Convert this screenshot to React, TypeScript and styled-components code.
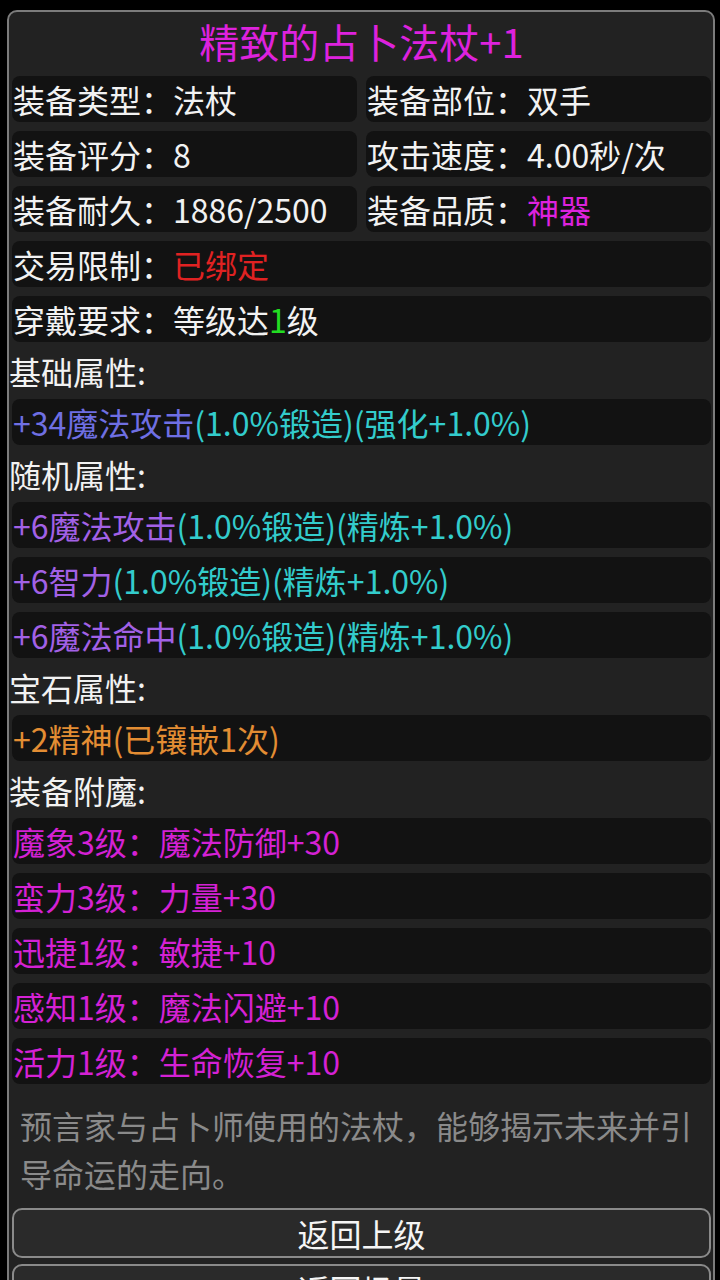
import React from "react";
import styled, { createGlobalStyle } from "styled-components";

const GlobalStyle = createGlobalStyle`
  html, body {
    margin: 0;
    padding: 0;
    background: #000;
  }
  body {
    font-family: "Noto Sans CJK SC", "Noto Sans", sans-serif;
    color: #f2f2f2;
  }
  * { box-sizing: border-box; }
`;

const Page = styled.div`
  padding: 10px 0 0 7px;
  width: 715px;
  height: 1280px;
  overflow: hidden;
`;

const Panel = styled.div`
  border: 2px solid #7c7c7c;
  border-radius: 10px;
  background: #222222;
  padding: 0 2px 20px 3px;
`;

const Title = styled.div`
  text-align: center;
  font-size: 40px;
  line-height: 52px;
  padding-top: 3px;
  margin-bottom: 9px;
  color: #dd22dd;
  white-space: nowrap;
`;

const Stack = styled.div`
  display: flex;
  flex-direction: column;
  gap: 9px;
`;

const Grid = styled.div`
  display: grid;
  grid-template-columns: 1fr 1fr;
  gap: 9px;
`;

const Box = styled.div`
  background: #121212;
  border-radius: 8px;
  height: 46px;
  line-height: 46px;
  padding-left: 1px;
  font-size: 32px;
  color: #f2f2f2;
  white-space: nowrap;
  overflow: hidden;
`;

const Header = styled.div`
  height: 39px;
  line-height: 40px;
  margin-left: -3px;
  font-size: 32px;
  color: #f2f2f2;
  white-space: nowrap;
`;

const Tint = styled.span<{ $c: string }>`
  color: ${(p) => p.$c};
`;

const Desc = styled.div`
  color: #8a8a8a;
  font-size: 32px;
  line-height: 48px;
  padding: 8px 10px 2px 8px;
`;

const Buttons = styled.div`
  display: flex;
  flex-direction: column;
  gap: 6px;
`;

const Button = styled.button`
  width: 100%;
  height: 50px;
  border: 2px solid #8a8a8a;
  border-radius: 10px;
  background: #2a2a2a;
  color: #f5f5f5;
  font-family: inherit;
  font-size: 32px;
  line-height: 46px;
  padding: 0;
  text-align: center;
`;

const WHITE = "#f2f2f2";
const MAGENTA = "#dd22dd";
const BLUE = "#6f6fe3";
const PURPLE = "#a261e6";
const CYAN = "#33cccc";
const ORANGE = "#e38d33";
const RED = "#e02222";
const GREEN = "#22dd22";
const ENCH = "#d421d4";

type Part = [string, string];

const basic: Part[][] = [
  [["+34魔法攻击", BLUE], ["(1.0%锻造)(强化+1.0%)", CYAN]],
];

const random: Part[][] = [
  [["+6魔法攻击", PURPLE], ["(1.0%锻造)(精炼+1.0%)", CYAN]],
  [["+6智力", PURPLE], ["(1.0%锻造)(精炼+1.0%)", CYAN]],
  [["+6魔法命中", PURPLE], ["(1.0%锻造)(精炼+1.0%)", CYAN]],
];

const gems: Part[][] = [[["+2精神(已镶嵌1次)", ORANGE]]];

const enchants: Part[][] = [
  [["魔象3级：魔法防御+30", ENCH]],
  [["蛮力3级：力量+30", ENCH]],
  [["迅捷1级：敏捷+10", ENCH]],
  [["感知1级：魔法闪避+10", ENCH]],
  [["活力1级：生命恢复+10", ENCH]],
];

const Line: React.FC<{ parts: Part[] }> = ({ parts }) => (
  <Box>
    {parts.map(([t, c], i) => (
      <Tint key={i} $c={c}>
        {t}
      </Tint>
    ))}
  </Box>
);

const Section: React.FC<{ title: string; rows: Part[][] }> = ({ title, rows }) => (
  <>
    <Header>{title}</Header>
    {rows.map((r, i) => (
      <Line key={i} parts={r} />
    ))}
  </>
);

export default function App() {
  return (
    <>
      <GlobalStyle />
      <Page>
        <Panel>
          <Title>精致的占卜法杖+1</Title>
          <Stack>
            <Grid>
              <Line parts={[["装备类型：法杖", WHITE]]} />
              <Line parts={[["装备部位：双手", WHITE]]} />
              <Line parts={[["装备评分：8", WHITE]]} />
              <Line parts={[["攻击速度：4.00秒/次", WHITE]]} />
              <Line parts={[["装备耐久：1886/2500", WHITE]]} />
              <Line parts={[["装备品质：", WHITE], ["神器", MAGENTA]]} />
            </Grid>
            <Line parts={[["交易限制：", WHITE], ["已绑定", RED]]} />
            <Line
              parts={[
                ["穿戴要求：等级达", WHITE],
                ["1", GREEN],
                ["级", WHITE],
              ]}
            />
            <Section title="基础属性:" rows={basic} />
            <Section title="随机属性:" rows={random} />
            <Section title="宝石属性:" rows={gems} />
            <Section title="装备附魔:" rows={enchants} />
            <Desc>预言家与占卜师使用的法杖，能够揭示未来并引导命运的走向。</Desc>
            <Buttons>
              <Button>返回上级</Button>
              <Button>返回场景</Button>
            </Buttons>
          </Stack>
        </Panel>
      </Page>
    </>
  );
}
